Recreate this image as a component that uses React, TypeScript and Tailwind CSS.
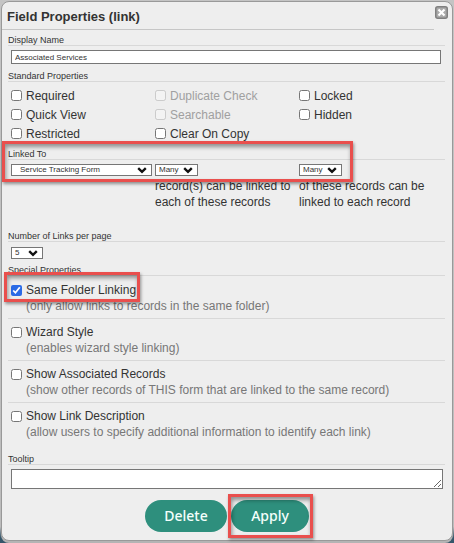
import type { ReactNode } from "react";

function Highlight({ className }: { className: string }) {
  return (
    <div
      aria-hidden="true"
      className={`pointer-events-none absolute z-10 border-[3px] border-[#e94f4d] shadow-[1px_2px_3px_rgba(0,0,0,0.4),inset_1px_3px_4px_rgba(0,0,0,0.4)] ${className}`}
    />
  );
}

function SectionLabel({ children, htmlFor }: { children: ReactNode; htmlFor?: string }) {
  const style = "flex h-4 items-end border-b border-[#d8d8d8] text-[9px] leading-[9px] text-[#333]";
  return htmlFor ? (
    <label htmlFor={htmlFor} className={style}>{children}</label>
  ) : (
    <h2 className={style}>{children}</h2>
  );
}

function Select({ id, label, value, className, inset = "pl-[3px]" }: {
  id: string;
  label?: string;
  value: string;
  className: string;
  inset?: string;
}) {
  return (
    <div className={`relative h-3 ${className}`}>
      <select
        id={id}
        aria-label={label}
        className={`block h-3 w-full appearance-none border border-[#767676] bg-white text-[8px] leading-[10px] text-[#333] ${inset}`}
      >
        <option>{value}</option>
      </select>
      <svg viewBox="0 0 10 7" className="pointer-events-none absolute top-[3px] right-[5px] h-[7px] w-[10px]" fill="none" stroke="#111" strokeWidth="2.4">
        <path d="M1.2 1.2 5 4.8 8.8 1.2" />
      </svg>
    </div>
  );
}

function Tick({ id, label, checked, disabled }: { id: string; label: string; checked?: boolean; disabled?: boolean }) {
  return (
    <div className="flex items-center gap-1">
      <input id={id} type="checkbox" defaultChecked={checked} disabled={disabled} className="m-0 size-[11px] shrink-0 accent-[#2b6be6]" />
      <label htmlFor={id} className={`text-[12px] leading-4 ${disabled ? "text-[#a0a0a0]" : "text-[#333]"}`}>{label}</label>
    </div>
  );
}

const standard = [
  { id: "required", label: "Required" },
  { id: "duplicate", label: "Duplicate Check", disabled: true },
  { id: "locked", label: "Locked" },
  { id: "quick", label: "Quick View" },
  { id: "searchable", label: "Searchable", disabled: true },
  { id: "hidden", label: "Hidden" },
  { id: "restricted", label: "Restricted" },
  { id: "clear", label: "Clear On Copy" },
];

const special = [
  { id: "folder", label: "Same Folder Linking", note: "(only allow links to records in the same folder)", checked: true },
  { id: "wizard", label: "Wizard Style", note: "(enables wizard style linking)" },
  { id: "associated", label: "Show Associated Records", note: "(show other records of THIS form that are linked to the same record)" },
  { id: "description", label: "Show Link Description", note: "(allow users to specify additional information to identify each link)" },
];

const pill = "h-8 rounded-full bg-[#2e8f7d] font-['Noto_Sans',sans-serif] text-[14px] leading-5 font-medium text-[#f4fffc]";

export default function App() {
  return (
    <div className="min-h-screen bg-[linear-gradient(#c4c4c4_0%,#bcbcbc_97%,#35566a_99%)] p-px font-['Liberation_Sans',Arial,sans-serif] text-[#333]">
      <form className="rounded-lg border border-[#999] bg-[#eee] pb-2 shadow-[0_2px_0_#b4b4b4]" onSubmit={(e) => e.preventDefault()}>
        <header className="flex items-start">
          <h1 className="h-7 flex-1 border-b border-[#c6c6c6] pt-[7px] pl-[5px] text-[13px] leading-4 font-bold">Field Properties (link)</h1>
          <button type="button" aria-label="Close" className="mt-1 mr-1 ml-px h-[13px] w-[13px]">
            <svg viewBox="0 0 13 13" className="size-[13px]">
              <rect x=".75" y=".75" width="11.5" height="11.5" rx="2" fill="#aaa" stroke="#808080" strokeWidth="1.5" />
              <path d="M3.5 3.5 9.5 9.5M9.5 3.5 3.5 9.5" stroke="#fff" strokeWidth="2.2" />
            </svg>
          </button>
        </header>

        <div className="pr-[7px] pl-[6px]">
          <section>
            <SectionLabel htmlFor="name">Display Name</SectionLabel>
            <div className="pt-1 pr-1 pb-[2px] pl-[3px]">
              <input id="name" type="text" defaultValue="Associated Services" className="block h-[14px] w-full border border-[#767676] bg-white px-[3px] text-[8px] leading-[12px] text-[#333]" />
            </div>
          </section>

          <section>
            <SectionLabel>Standard Properties</SectionLabel>
            <div className="grid auto-rows-[19px] grid-cols-3 pt-1 pr-[2px] pb-px pl-[3px]">
              {standard.map((item) => <Tick key={item.id} {...item} />)}
            </div>
          </section>

          <section className="relative">
            <Highlight className="-top-[3px] -left-[6px] h-[41px] w-[351px]" />
            <SectionLabel htmlFor="form">Linked To</SectionLabel>
            <div className="grid grid-cols-3 pt-1 pr-[2px] pb-4 pl-[3px]">
              <Select id="form" value="Service Tracking Form" className="mr-[3px]" inset="pl-[8px]" />
              <div>
                <Select id="records" label="Linked records" value="Many" className="w-[43px]" />
                <p className="pt-[2px] text-[12px] leading-4">record(s) can be linked to each of these records</p>
              </div>
              <div>
                <Select id="targets" label="Records per record" value="Many" className="w-[43px]" />
                <p className="pt-[2px] text-[12px] leading-4">of these records can be linked to each record</p>
              </div>
            </div>
          </section>

          <section>
            <SectionLabel htmlFor="count">Number of Links per page</SectionLabel>
            <div className="px-[3px] pt-[5px] pb-px">
              <Select id="count" value="5" className="w-8" />
            </div>
          </section>

          <section>
            <SectionLabel>Special Properties</SectionLabel>
            <div className="pt-px pb-[5px]">
              {special.map(({ note, ...item }) => (
                <div key={item.id} className="relative border-b border-[#d8d8d8] pt-[5px] pb-1 pl-[3px] last:border-b-0">
                  {item.checked && <Highlight className="-top-[5px] -left-[4px] h-[30px] w-[136px]" />}
                  <Tick {...item} />
                  <p className="pl-[15px] text-[12px] leading-4 text-[#777]">{note}</p>
                </div>
              ))}
            </div>
          </section>

          <section>
            <SectionLabel htmlFor="tooltip">Tooltip</SectionLabel>
            <div className="pt-1 pr-[2px] pl-[3px]">
              <textarea id="tooltip" rows={1} className="block h-5 w-full border border-[#767676] bg-white text-[9px]" />
            </div>
          </section>
        </div>

        <div className="flex justify-center gap-1 pt-[11px]">
          <button type="button" className={`w-[82px] ${pill}`}>Delete</button>
          <div className="relative">
            <Highlight className="-top-[6px] -left-[3px] h-[44px] w-[85px]" />
            <button type="submit" className={`w-[78px] ${pill}`}>Apply</button>
          </div>
        </div>
      </form>
    </div>
  );
}
